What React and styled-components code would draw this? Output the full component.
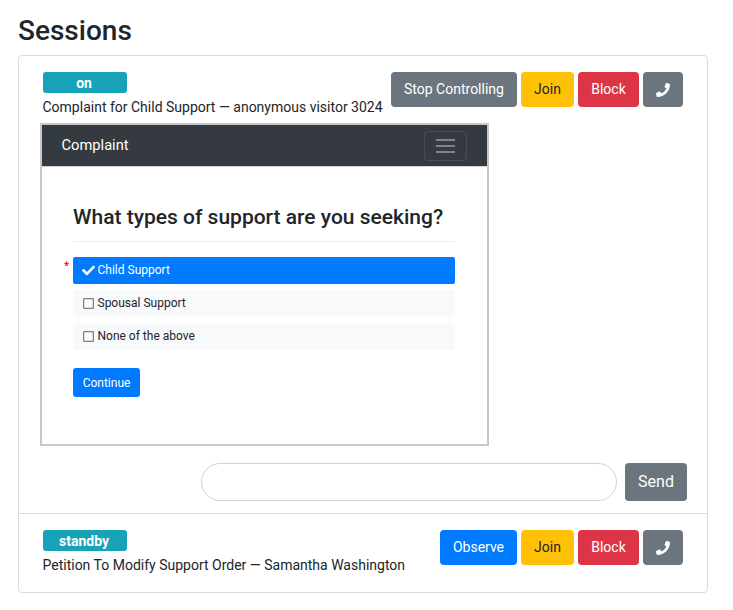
import React from "react";
import styled, { createGlobalStyle } from "styled-components";

const Global = createGlobalStyle`
  html, body { margin: 0; padding: 0; background: #fff; }
  body { font-family: Roboto, "Liberation Sans", sans-serif; color: #212529; font-size: 14px; line-height: 21px; }
  * { box-sizing: border-box; }
`;
const Page = styled.div`padding: 14px 25px 0 18px;`;
const Title = styled.h1`margin: 0 0 7px; font-size: 28px; font-weight: 500; line-height: 34px;`;
const Card = styled.div`border: 1px solid #dcdcdc; border-radius: 4px; background: #fff;`;
const Item = styled.div`
  padding: 16px 24px ${(p) => p.$pb}px;
  & + & { border-top: 1px solid #dcdcdc; }
`;
const Head = styled.div`display: flex; justify-content: space-between; align-items: flex-start;`;
const Info = styled.div`display: flex; flex-direction: column; align-items: flex-start;`;
const Badge = styled.div`
  width: 84px; height: 21px; background: #17a2b8; color: #fff; border-radius: 3px; padding-right: 2px;
  font-size: 14px; font-weight: 700; line-height: 22px; text-align: center;
`;
const Subject = styled.div`margin: 4px 0 0 -0.5px; font-size: 14px; line-height: 21px; white-space: nowrap;`;
const Actions = styled.div`display: flex; gap: 4px;`;
const colors = {
  grey: ["#6c757d", "#fff"], yellow: ["#ffc107", "#212529"], red: ["#dc3545", "#fff"], blue: ["#007bff", "#fff"],
};
const Btn = styled.button`
  height: ${(p) => p.$h || 35}px; width: ${(p) => p.$w}px; padding: 0; border: 0; border-radius: 4px;
  background: ${(p) => colors[p.$c][0]}; color: ${(p) => colors[p.$c][1]};
  font: 400 14px/21px Roboto, sans-serif; display: flex; align-items: center; justify-content: center;
`;
const Frame = styled.div`
  width: 449px; height: 323px; margin: 5px 0 0 -3px; border: 2px solid #c8c8c8; overflow: hidden;
`;
const Navbar = styled.div`
  height: 41px; background: #343a40; display: flex; align-items: center; justify-content: space-between;
  padding: 0 20px 0 19.5px; color: #fff; font-size: 14.7px; box-shadow: 0 1px 0 #d4d4d4;
`;
const Toggler = styled.div`
  width: 43px; height: 30px; border: 1px solid rgba(255,255,255,.1); border-radius: 4px;
  display: flex; align-items: center; justify-content: center;
`;
const Form = styled.div`padding: 36px 32px 0 31px;`;
const Question = styled.h2`margin: 0; font-size: 21px; font-weight: 500; line-height: 30px;`;
const Rule = styled.div`height: 1px; background: #eee; margin: 9px 0 15px;`;
const Options = styled.div`display: flex; flex-direction: column; gap: 6px;`;
const Option = styled.div`
  position: relative; height: 27px; border-radius: 2px; padding-left: 9px; display: flex; align-items: center; gap: 2.5px;
  font-size: 12px; background: ${(p) => (p.$on ? "#007bff" : "#f8f9fa")}; color: ${(p) => (p.$on ? "#fff" : "#212529")};
`;
const Star = styled.span`position: absolute; left: -9px; top: 0; color: red; font-size: 12px; line-height: 18px;`;
const IconBox = styled.span`width: 13px; display: flex; align-items: center; justify-content: center;`;
const Continue = styled.button`
  margin-top: 18px; width: 67px; height: 29px; border: 0; border-radius: 3px; background: #007bff; color: #fff;
  font: 400 12px/18px Roboto, sans-serif; padding: 0;
`;
const SendRow = styled.div`display: flex; justify-content: flex-end; gap: 8px; margin: 17px -4px 0 0;`;
const Input = styled.input`
  width: 416px; height: 38px; border: 1px solid #ced4da; border-radius: 19px; background: #fff; outline: none;
`;
const SendBtn = styled(Btn)`font-size: 16px; line-height: 24px;`;

const Phone = () => (
  <svg width="14" height="14" viewBox="0 0 512 512" fill="#fff">
    <path d="M493.4 24.6l-104-24c-11.3-2.6-22.9 3.3-27.5 13.9l-48 112c-4.2 9.8-1.4 21.3 6.9 28l60.6 49.6c-36 76.7-98.9 140.5-177.2 177.2l-49.6-60.6c-6.8-8.3-18.2-11.1-28-6.9l-112 48C3.9 366.5-2 378.1.6 389.4l24 104C27.1 504.2 36.7 512 48 512c256.1 0 464-207.5 464-464 0-11.2-7.7-20.9-18.6-23.4z" />
  </svg>
);
const Check = () => (
  <svg width="13" height="13" viewBox="0 0 512 512" fill="#fff">
    <path d="M173.9 439.4L7.5 273c-10-10-10-26.2 0-36.2l36.2-36.2c10-10 26.2-10 36.2 0L192 312.7 432.1 72.6c10-10 26.2-10 36.2 0l36.2 36.2c10 10 10 26.2 0 36.2L210.1 439.4c-10 10-26.2 10-36.2 0z" />
  </svg>
);
const Square = () => (
  <svg width="11" height="11" viewBox="0 0 11 11" fill="none">
    <rect x=".6" y=".6" width="9.8" height="9.8" rx="1" stroke="#808080" strokeWidth="1.3" />
  </svg>
);
const Burger = () => (
  <svg width="19" height="16" viewBox="0 0 19 16" stroke="rgba(255,255,255,.5)" strokeWidth="1.3">
    <path d="M0 2h19M0 8h19M0 14h19" />
  </svg>
);

export default function App() {
  return (
    <Page>
      <Global />
      <Title>Sessions</Title>
      <Card>
        <Item $pb={12}>
          <Head>
            <Info>
              <Badge>on</Badge>
              <Subject>Complaint for Child Support — anonymous visitor 3024</Subject>
            </Info>
            <Actions>
              <Btn $c="grey" $w={126}>Stop Controlling</Btn>
              <Btn $c="yellow" $w={53}>Join</Btn>
              <Btn $c="red" $w={61}>Block</Btn>
              <Btn $c="grey" $w={40}><Phone /></Btn>
            </Actions>
          </Head>
          <Frame>
            <Navbar>
              Complaint
              <Toggler><Burger /></Toggler>
            </Navbar>
            <Form>
              <Question>What types of support are you seeking?</Question>
              <Rule />
              <Options>
                <Option $on><Star>*</Star><IconBox><Check /></IconBox>Child Support</Option>
                <Option><IconBox><Square /></IconBox>Spousal Support</Option>
                <Option><IconBox><Square /></IconBox>None of the above</Option>
              </Options>
              <Continue>Continue</Continue>
            </Form>
          </Frame>
          <SendRow>
            <Input />
            <SendBtn $c="grey" $h={38} $w={62}>Send</SendBtn>
          </SendRow>
        </Item>
        <Item $pb={16}>
          <Head>
            <Info>
              <Badge>standby</Badge>
              <Subject>Petition To Modify Support Order — Samantha Washington</Subject>
            </Info>
            <Actions>
              <Btn $c="blue" $w={77}>Observe</Btn>
              <Btn $c="yellow" $w={53}>Join</Btn>
              <Btn $c="red" $w={61}>Block</Btn>
              <Btn $c="grey" $w={40}><Phone /></Btn>
            </Actions>
          </Head>
        </Item>
      </Card>
    </Page>
  );
}
